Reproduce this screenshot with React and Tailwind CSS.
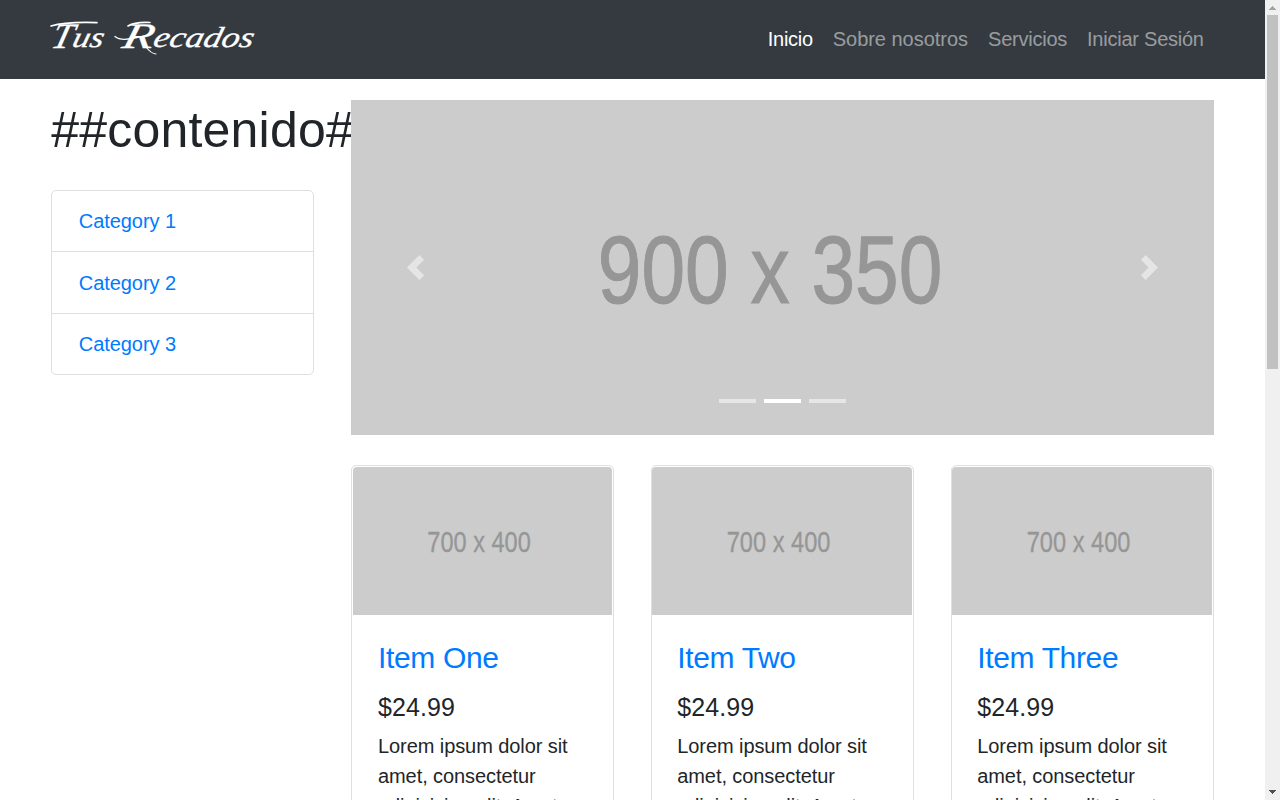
const NAV_LINKS = [
  { label: 'Inicio', tracking: 'tracking-[-0.3px]' },
  { label: 'Sobre nosotros', tracking: 'tracking-[-0.02px]' },
  { label: 'Servicios', tracking: 'tracking-[-0.24px]' },
  { label: 'Iniciar Sesión', tracking: 'tracking-[-0.24px]' },
];
const CATEGORIES = ['Category 1', 'Category 2', 'Category 3'];
const ITEMS = ['Item One', 'Item Two', 'Item Three'];

function Logo() {
  return (
    <svg className="block h-[40px] w-[212px] overflow-visible" viewBox="0 0 212 40" fill="#fff">
      <g transform="translate(0 29) skewX(-14)" fontFamily="'Liberation Serif', serif" fontStyle="italic" stroke="#fff" strokeWidth="0.3">
        <text x="-1" y="1" fontSize="36" textLength="21" lengthAdjust="spacingAndGlyphs">T</text>
        <text x="20" y="0" fontSize="29" textLength="31" lengthAdjust="spacingAndGlyphs">us</text>
        <text x="70" y="1" fontSize="36" textLength="31" lengthAdjust="spacingAndGlyphs">R</text>
        <text x="101" y="0" fontSize="29" textLength="100" lengthAdjust="spacingAndGlyphs">ecados</text>
      </g>
      {/* decorative flourishes around the two capitals */}
      <g fill="none" stroke="#fff" strokeLinecap="round">
        <path d="M0 8C10 5 28 4 46 4.6" strokeWidth="1.6" />
        <path d="M64 18.5C68 22 76 22 86 19.5" strokeWidth="1.3" />
        <path d="M77 8C82 5 90 4 99 4.5" strokeWidth="1.6" />
        <path d="M95 29C98 33 101 35.5 105 36" strokeWidth="1.1" />
      </g>
    </svg>
  );
}

function Navbar() {
  return (
    <nav className="h-[79px] shrink-0 bg-[#343a40]">
      <div className="mx-auto flex w-[1200px] justify-between px-[18.75px]">
        <a href="#" className="mt-[18px]" aria-label="Tus Recados"><Logo /></a>
        <ul className="mt-6 flex">
          {NAV_LINKS.map(({ label, tracking }, i) => (
            <li key={label}>
              <a href="#" className={`block px-[10px] leading-[30px] ${tracking} ${i === 0 ? 'text-white' : 'text-white/50'}`}>{label}</a>
            </li>
          ))}
        </ul>
      </div>
    </nav>
  );
}

function Placeholder({ width, height, x, y, size, length, label, className }) {
  return (
    <svg viewBox={`0 0 ${width} ${height}`} preserveAspectRatio="none" className={`block w-full bg-[#ccc] ${className}`}>
      <text x={x} y={y} fill="#969696" stroke="#969696" strokeWidth={size / 90} fontFamily="'Liberation Sans', Arial, sans-serif" fontSize={size} textLength={length} lengthAdjust="spacingAndGlyphs">{label}</text>
    </svg>
  );
}

function Carousel() {
  return (
    <div className="relative my-[30px] h-[335.4px]">
      <Placeholder width={862.5} height={335.4} x={246.8} y={203} size={96} length={344.5} label="900 x 350" className="h-full" />
      <a href="#" aria-label="Previous" className="absolute inset-y-0 left-0 flex w-[15%] items-center justify-center">
        <svg className="size-[25px] opacity-50" viewBox="0 0 8 8" fill="#fff"><path d="M5.25 0l-4 4 4 4 1.5-1.5-2.5-2.5 2.5-2.5-1.5-1.5z" /></svg>
      </a>
      <a href="#" aria-label="Next" className="absolute inset-y-0 right-0 flex w-[15%] items-center justify-center">
        <svg className="size-[25px] opacity-50" viewBox="0 0 8 8" fill="#fff"><path d="M2.75 0l-1.5 1.5 2.5 2.5-2.5 2.5 1.5 1.5 4-4-4-4z" /></svg>
      </a>
      <div className="absolute inset-x-0 bottom-[32px] flex justify-center gap-2">
        <span className="h-1 w-[37px] bg-white/50" />
        <span className="h-1 w-[37px] bg-white" />
        <span className="h-1 w-[37px] bg-white/50" />
      </div>
    </div>
  );
}

function Card({ title, first }) {
  return (
    <div className={`rounded-[5px] border border-[#dfdfdf] pt-[0.25px] pr-px ${first ? 'pl-px' : ''}`}>
      <Placeholder width={260} height={148.57} x={74.8} y={85} size={29} length={104} label="700 x 400" className="h-[148.57px] rounded-t-[4px]" />
      <div className={`py-[25px] pr-[24px] ${first ? 'pl-[24.75px]' : 'pl-[25px]'}`}>
        <h4 className="mb-[15px] text-[30px] leading-[36px] tracking-[-0.35px] text-[#007bff]"><a href="#">{title}</a></h4>
        <h5 className="mb-[9px] pt-px text-[25px] leading-[30px] tracking-[0.1px]">$24.99</h5>
        <p className="tracking-[-0.08px]">Lorem ipsum dolor sit<br />amet, consectetur<br />adipisicing elit. Amet numquam aspernatur!</p>
      </div>
    </div>
  );
}

function Scrollbar() {
  return (
    <div className="flex h-full w-[15px] shrink-0 flex-col items-center bg-[#f0f0f0]">
      <svg className="h-[15px] w-[15px] shrink-0" viewBox="0 0 15 15" fill="#a3a3a3" shapeRendering="crispEdges"><path d="M4 10l3.5-4L11 10z" /></svg>
      <div className="h-[354px] w-[11px] bg-[#c1c1c1]" />
      <svg className="mt-auto h-[15px] w-[15px] shrink-0" viewBox="0 0 15 15" fill="#505050" shapeRendering="crispEdges"><path d="M4 5h7l-3.5 4z" /></svg>
    </div>
  );
}

export default function App() {
  return (
    <div className="flex h-[800px] w-[1280px] overflow-hidden bg-white font-['Liberation_Sans',Arial,sans-serif] text-[20px] leading-[30px] text-[#212529]">
      <div className="flex h-full w-[1265px] flex-col overflow-hidden">
        <Navbar />
        <main className="mx-auto -mt-[9px] flex w-[1200px]">
          <aside className="w-[300px] shrink-0 px-[18.75px]">
            <h1 className="my-[30px] text-[50px] leading-[60px] tracking-[0.2px]">##contenido##</h1>
            <div className="divide-y divide-[#dfdfdf] rounded-[5px] border border-[#dfdfdf]">
              {CATEGORIES.map((name) => (
                <a key={name} href="#" className="block px-[26.5px] pt-[15.25px] pb-[15px] tracking-[-0.05px] text-[#007bff]">{name}</a>
              ))}
            </div>
          </aside>
          <section className="w-[900px] shrink-0 px-[18.75px]">
            <Carousel />
            <div className="grid grid-cols-3 gap-[37.5px]">
              {ITEMS.map((title, i) => <Card key={title} title={title} first={i === 0} />)}
            </div>
          </section>
        </main>
      </div>
      <Scrollbar />
    </div>
  );
}
